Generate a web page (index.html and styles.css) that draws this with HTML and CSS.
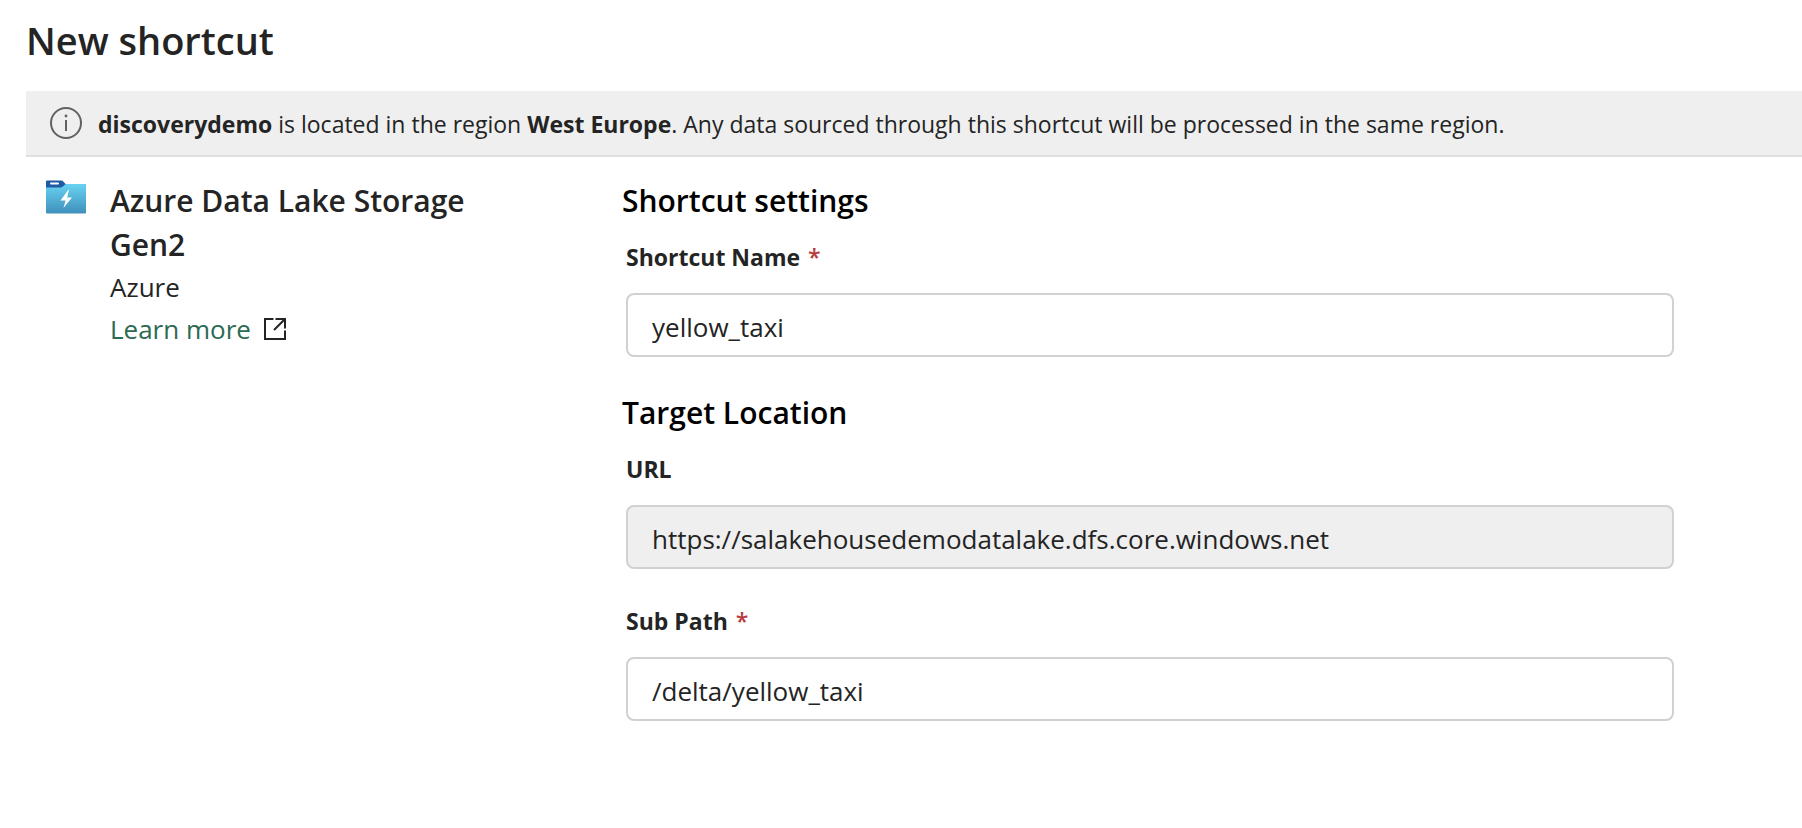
FILE: index.html
```html
<!DOCTYPE html>
<html lang="en">
<head>
<meta charset="utf-8">
<meta name="viewport" content="width=device-width, initial-scale=1">
<title>New shortcut</title>
<link rel="stylesheet" href="styles.css">
</head>
<body>
<main class="page">
  <h1 class="title">New shortcut</h1>
  <div class="banner" role="status">
    <svg class="banner-icon" viewBox="0 0 32 32" aria-hidden="true">
      <circle cx="16" cy="16" r="15" fill="none" stroke="#616161" stroke-width="2"/>
      <circle cx="16" cy="9" r="1.4" fill="#616161"/>
      <path d="M16 13v11" stroke="#616161" stroke-width="2"/>
    </svg>
    <p class="banner-text"><strong>discoverydemo</strong> is located in the region <strong>West Europe</strong>. Any data sourced through this shortcut will be processed in the same region.</p>
  </div>
  <div class="content">
    <aside class="source">
      <svg class="source-icon" viewBox="0 0 40 34" aria-hidden="true">
        <defs>
          <linearGradient id="folder" x1="0" y1="0" x2="0" y2="1">
            <stop offset="0" stop-color="#68d3f2"/>
            <stop offset="1" stop-color="#3f8fbb"/>
          </linearGradient>
        </defs>
        <path d="M0 1.5Q0 .5 1 .5H15Q16.500 .5 17.500 1.700L20 4.500V8H0z" fill="#1f5ba3"/>
        <path d="M0 7.500H14.500Q16 7.500 17 6.500L19 4.500Q19.600 4 20.500 4H40V32.500Q40 33.500 39 33.500H1Q0 33.500 0 32.500z" fill="url(#folder)"/>
        <rect x="4" y="2.500" width="9" height="2" rx="1" fill="#fff"/>
        <path d="M22.500 9.500L14.500 20.500H19.500L17.500 28L26 17.500H21.200L23 9.500z" fill="#fff"/>
      </svg>
      <div class="source-info">
        <h2 class="heading source-name">Azure Data Lake Storage Gen2</h2>
        <p class="source-kind">Azure</p>
        <a class="learn" href="#">Learn more
          <svg class="learn-icon" viewBox="0 0 24 24" aria-hidden="true">
            <path d="M10.500 2H2V22H22V13.500M12.500 2H22V11.500M22 2L11 13" fill="none" stroke="#242424" stroke-width="2"/>
          </svg>
        </a>
      </div>
    </aside>
    <form class="settings">
      <h2 class="heading">Shortcut settings</h2>
      <div class="field">
        <label class="label" for="name">Shortcut Name <span class="required">*</span></label>
        <input class="input" id="name" type="text" value="yellow_taxi" required>
      </div>
      <h2 class="heading">Target Location</h2>
      <div class="field">
        <label class="label" for="url">URL</label>
        <input class="input" id="url" type="text" value="https://salakehousedemodatalake.dfs.core.windows.net" readonly>
      </div>
      <div class="field">
        <label class="label" for="path">Sub Path <span class="required">*</span></label>
        <input class="input" id="path" type="text" value="/delta/yellow_taxi" required>
      </div>
    </form>
  </div>
</main>
</body>
</html>
```
FILE: styles.css
```css
* {
  box-sizing: border-box;
}

body {
  margin: 0;
  background: #fff;
  color: #242424;
  font-family: "Open Sans", "Noto Sans", sans-serif;
}

h1, h2, p {
  margin: 0;
}

.page {
  padding: 12px 0 40px 26px;
}

.title {
  font-size: 38px;
  font-weight: 600;
  line-height: 56px;
}

.banner {
  display: flex;
  align-items: center;
  gap: 16px;
  min-height: 66px;
  margin-top: 23px;
  padding: 0 24px;
  background: #efefef;
  border-bottom: 2px solid #dfdfdf;
}

.banner-icon {
  flex: none;
  width: 32px;
  height: 32px;
}

.banner-text {
  padding-top: 2px;
  font-size: 23px;
  line-height: 32px;
}

.content {
  display: flex;
  gap: 80px;
  padding: 22px 128px 0 20px;
}

.source {
  display: flex;
  flex: none;
  gap: 24px;
  width: 496px;
}

.source-icon {
  flex: none;
  width: 40px;
  height: 36px;
}

.heading {
  font-size: 30px;
  font-weight: 600;
  line-height: 44px;
}

.source-name {
  max-width: 400px;
}

.source-kind {
  font-size: 26px;
  line-height: 40px;
}

.learn {
  display: inline-flex;
  align-items: center;
  gap: 12px;
  color: #2b6a53;
  font-size: 26px;
  line-height: 44px;
  text-decoration: none;
}

.learn-icon {
  width: 24px;
  height: 24px;
}

.settings {
  flex: 1;
  min-width: 0;
  color: #000;
}

.field {
  display: flex;
  flex-direction: column;
  gap: 18px;
  padding: 16px 0 34px 4px;
}

.field + .field {
  padding-top: 0;
}

.label {
  color: #242424;
  font-size: 23px;
  font-weight: 700;
  line-height: 36px;
}

.required {
  margin-left: 2px;
  color: #b83a3a;
  font-weight: 600;
}

.input {
  width: 100%;
  height: 64px;
  padding: 4px 24px 0;
  border: 2px solid #d1d1d1;
  border-radius: 8px;
  background: #fff;
  color: #242424;
  font-family: inherit;
  font-size: 26px;
  outline: none;
}

.input:read-only {
  background: #efefef;
}
```
